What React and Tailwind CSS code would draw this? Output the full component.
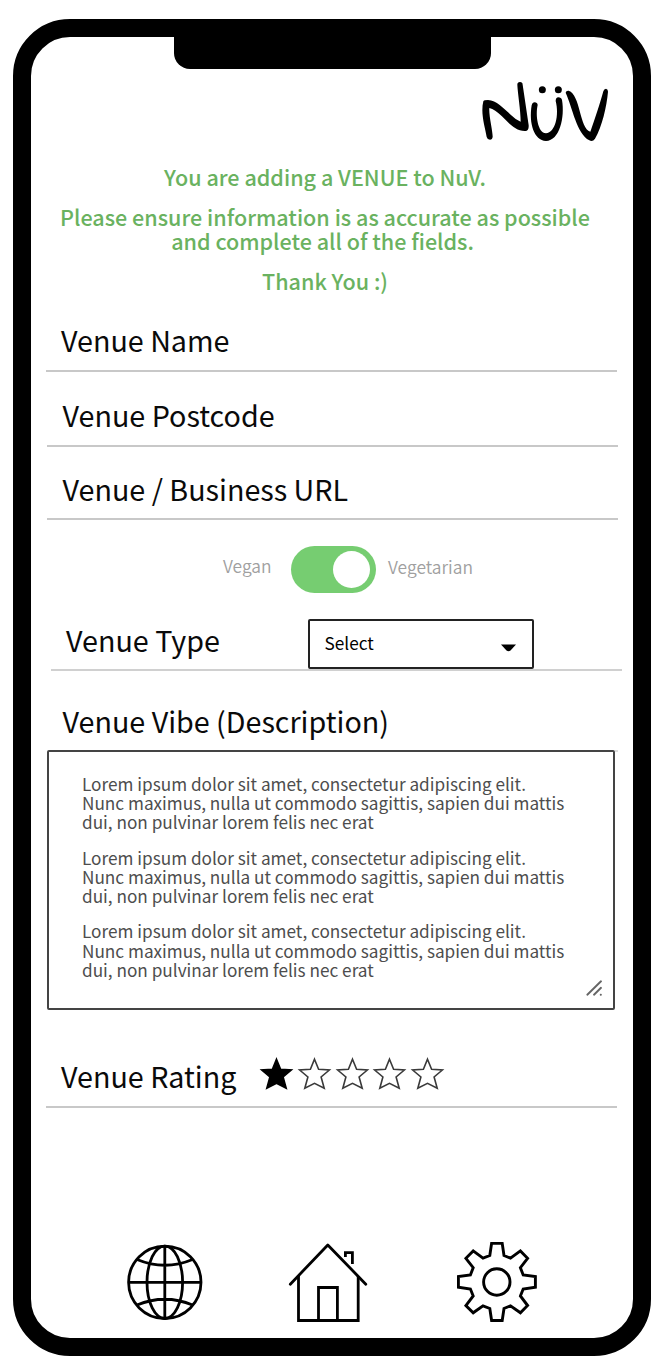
const STAR =
  "M15.5 1.2 L19.6 11.2 L30.4 12 L22.1 19 L25.2 30.2 L15.5 25.4 L5.8 30.2 L8.9 19 L0.6 12 L11.4 11.2 Z";

function Logo() {
  return (
    <svg role="img" aria-label="NüV" className="h-[64px] w-[132px]" viewBox="60 60 396 192" fill="#000">
      <path d="M70 124 Q71 120 84 120 C110 121 132 147 152 164 Q167 179 182 185 C182 150 173 100 172 74 Q172 66 180 66 Q188 66 188 74 L206 196 Q207 212 196 213 C165 214 145 187 125 168 Q105 149 88 144 C86 165 98 212 98 230 Q97 239 90 239 Q82 239 80 231 C75 200 61 160 70 124 Z" />
      <path d="M215 136 Q217 127 224 127 Q232 127 233 135 C226 165 233 219 258 220 C286 218 298 165 287 123 Q287 113 295 112 Q304 112 306 120 C315 172 299 242 258 243 C222 242 206 190 215 136 Z" />
      <path d="M317 98 Q318 91 326 92 C362 104 358 205 391 215 C404 180 420 130 430 94 Q432 86 438 86 Q444 87 444 95 C440 140 426 200 405 236 Q398 246 388 241 C350 220 338 145 317 98 Z" />
      <circle cx="247" cy="89" r="10.5" />
      <circle cx="295" cy="89" r="10.5" />
    </svg>
  );
}

function Label({ children, className = "" }) {
  return (
    <span className={`block whitespace-nowrap text-[28.7px] leading-[40px] text-[#0a0a0a] ${className}`}>
      {children}
    </span>
  );
}

function Stars() {
  return (
    <div className="flex gap-[6.7px]">
      {[0, 1, 2, 3, 4].map((i) => (
        <svg key={i} className="h-[31px] w-[31px] overflow-visible" viewBox="0 0 31 31">
          <path d={STAR} fill={i === 0 ? "#000" : "none"} stroke={i === 0 ? "#000" : "#3a3a3a"} strokeWidth="1.6" />
        </svg>
      ))}
    </div>
  );
}

function Globe() {
  return (
    <svg className="h-[76px] w-[76px]" viewBox="127 1245 76 76" fill="none" stroke="#000" strokeWidth="2.8">
      <circle cx="164.8" cy="1283.3" r="36.2" />
      <ellipse cx="164.8" cy="1283.3" rx="17.8" ry="36.2" />
      <path d="M164.8 1247v72.6M128 1283.3h73.6M137 1260.5q27.8 11.5 55.6 0M137 1306q27.8-11.5 55.6 0" />
    </svg>
  );
}

function House() {
  return (
    <svg className="h-[80px] w-[80px]" viewBox="288 1242 80 80" fill="none" stroke="#000" strokeWidth="2.8">
      <path strokeLinecap="round" strokeLinejoin="round" d="M290.3 1284.2 L327.8 1245 L365.8 1284.2" />
      <path d="M298.5 1276v44.5h59.7V1276M318.5 1320.5v-33h18.9v33M345.4 1257v-4.3h7v11.3" />
    </svg>
  );
}

function Gear() {
  return (
    <svg className="h-[80px] w-[80px]" viewBox="457 1242 80 80" fill="none" stroke="#000" strokeWidth="2.9">
      <path d="M491.6 1243.4 H502.2 L504 1255.5 L510.5 1258.2 L520.4 1250.9 L527.6 1258.3 L520.4 1267.7 L523.2 1275 L535.4 1276.6 V1287.2 L523.2 1289 L520.4 1296 L527.6 1305.5 L520.4 1312.8 L510.5 1305.8 L504 1308.5 L502.2 1320.5 H491.6 L489.8 1308.5 L483 1305.8 L473.2 1312.8 L465.9 1305.5 L473.2 1296 L470.4 1289 L458.4 1287.2 V1276.6 L470.4 1275 L473.2 1267.7 L465.9 1258.3 L473.2 1250.9 L483 1258.2 L489.8 1255.5 Z" />
      <circle cx="496.8" cy="1282" r="13.2" />
    </svg>
  );
}

const LOREM = [
  "Lorem ipsum dolor sit amet, consectetur adipiscing elit.",
  "Nunc maximus, nulla ut commodo sagittis, sapien dui mattis",
  "dui, non pulvinar lorem felis nec erat",
];

export default function App() {
  return (
    <div className="h-[1370px] w-[668px] overflow-hidden bg-white pl-[13px] pt-[19px] font-['Noto_Sans_CJK_SC',sans-serif]">
      <div className="relative flex h-[1337px] w-[638px] flex-col rounded-[57px] border-[18px] border-black bg-white">
        <div className="absolute left-[142.7px] top-[-1px] h-[33px] w-[317px] rounded-b-[16px] bg-black" />

        <header className="flex h-[128px] shrink-0 justify-end pr-[21px] pt-[43px]">
          <Logo />
        </header>

        <section className="h-[149px] shrink-0 space-y-4 pr-[14px] text-center text-[21.55px] font-medium leading-[24px] text-[#6ab260]">
          <p>You are adding a VENUE to NuV.</p>
          <p className="whitespace-nowrap">
            Please ensure information is as accurate as possible
            <br />
            <span className="pr-[5px]">and complete all of the fields.</span>
          </p>
          <p>Thank You :)</p>
        </section>

        <div className="ml-[15px] flex h-[58px] w-[571px] shrink-0 items-end border-b-2 border-[#c8c8c8] pb-[10px] pl-[15px]">
          <Label>Venue Name</Label>
        </div>
        <div className="ml-[16px] flex h-[75px] w-[571px] shrink-0 items-end border-b-2 border-[#c8c8c8] pb-[10px] pl-[15.5px]">
          <Label>Venue Postcode</Label>
        </div>
        <div className="ml-[16px] flex h-[73px] w-[571px] shrink-0 items-end border-b-2 border-[#c8c8c8] pb-[9px] pl-[15.5px]">
          <Label>Venue / Business URL</Label>
        </div>

        <div className="flex h-[98px] shrink-0 items-center pl-[192px] text-[17.4px] font-[350] leading-6 text-[#a0a0a0]">
          <span className="mb-[7px] w-[67.5px]">Vegan</span>
          <div className="flex h-[47px] w-[85px] items-center justify-end rounded-full bg-[#76cd71] pr-[6px]">
            <div className="h-[37px] w-[37px] rounded-full bg-white" />
          </div>
          <span className="mb-[4px] ml-[12.5px]">Vegetarian</span>
        </div>

        <div className="ml-[20px] flex h-[53px] w-[571px] shrink-0 items-start border-b-2 border-[#d0d0d0] pl-[15px]">
          <Label className="mt-[2px] w-[242px]">Venue Type</Label>
          <div className="mt-[1px] flex h-[50px] w-[226px] items-center justify-between rounded-[2px] border-2 border-[#222] bg-white pl-[14.5px] pr-[15px] text-[17.2px] text-black">
            <span className="mb-[3px] leading-6">Select</span>
            <svg className="mt-[7px] h-[8px] w-[17px]" viewBox="0 0 17 8">
              <path d="M1 0.5h15L10.5 6.5q-2 1.4-4 0z" fill="#000" />
            </svg>
          </div>
        </div>

        <div className="ml-[16px] flex h-[79px] shrink-0 items-end pb-[9px] pl-[15.5px]">
          <Label>Venue Vibe (Description)</Label>
        </div>
        <div className="flex shrink-0 items-start pl-[16px]">
          <div className="relative h-[260px] w-[568px] rounded-[2px] border-2 border-[#444] pl-[33px] pt-[22px] text-[17.2px] leading-[19.2px] text-[#4d4d4d]">
            {[0, 1, 2].map((p) => (
              <p key={p} className="mb-[16.1px] whitespace-nowrap">
                {LOREM.map((line) => (
                  <span key={line} className="block">
                    {line}
                  </span>
                ))}
              </p>
            ))}
            <svg className="absolute bottom-[11px] right-[10px] h-[18px] w-[18px]" viewBox="0 0 18 18" stroke="#666" strokeWidth="1.9" strokeLinecap="round">
              <path d="M2.3 15.7L16 2.3M9 15.7l7-6.9M15.7 15.7h.2" />
            </svg>
          </div>
          <div className="h-[2px] w-[3px] bg-[#ddd]" />
        </div>

        <div className="ml-[15px] flex h-[98px] w-[571px] shrink-0 items-end border-b-2 border-[#c8c8c8] pb-[7px] pl-[15px]">
          <Label className="mb-[3px] w-[200.3px]">Venue Rating</Label>
          <div className="mb-[10px]">
            <Stars />
          </div>
        </div>

        <nav className="mt-[134px] flex shrink-0 items-center pl-[96px]">
          <Globe />
          <div className="ml-[85px]">
            <House />
          </div>
          <div className="ml-[89px]">
            <Gear />
          </div>
        </nav>
      </div>
    </div>
  );
}
